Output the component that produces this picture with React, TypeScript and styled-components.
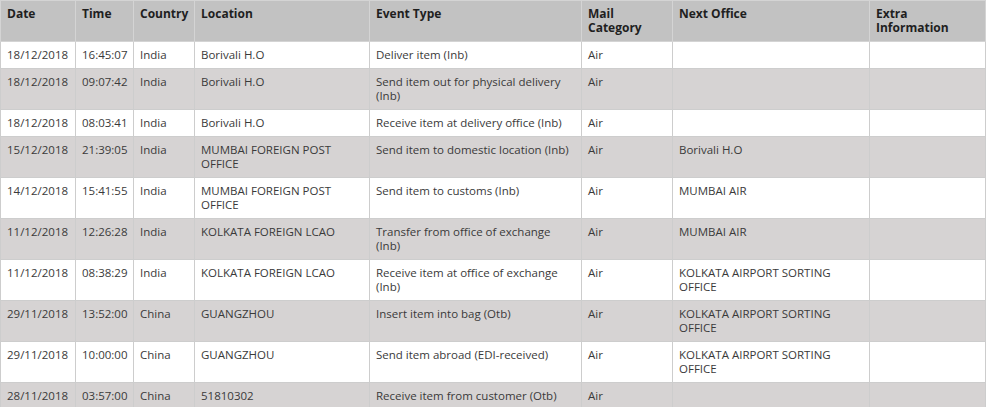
import styled, { createGlobalStyle } from "styled-components";

interface TrackEvent {
  date: string;
  time: string;
  country: string;
  location: string;
  eventType: string;
  mailCategory: string;
  nextOffice: string;
  extra: string;
}

const events: TrackEvent[] = [
  { date: "18/12/2018", time: "16:45:07", country: "India", location: "Borivali H.O", eventType: "Deliver item (Inb)", mailCategory: "Air", nextOffice: "", extra: "" },
  { date: "18/12/2018", time: "09:07:42", country: "India", location: "Borivali H.O", eventType: "Send item out for physical delivery (Inb)", mailCategory: "Air", nextOffice: "", extra: "" },
  { date: "18/12/2018", time: "08:03:41", country: "India", location: "Borivali H.O", eventType: "Receive item at delivery office (Inb)", mailCategory: "Air", nextOffice: "", extra: "" },
  { date: "15/12/2018", time: "21:39:05", country: "India", location: "MUMBAI FOREIGN POST OFFICE", eventType: "Send item to domestic location (Inb)", mailCategory: "Air", nextOffice: "Borivali H.O", extra: "" },
  { date: "14/12/2018", time: "15:41:55", country: "India", location: "MUMBAI FOREIGN POST OFFICE", eventType: "Send item to customs (Inb)", mailCategory: "Air", nextOffice: "MUMBAI AIR", extra: "" },
  { date: "11/12/2018", time: "12:26:28", country: "India", location: "KOLKATA FOREIGN LCAO", eventType: "Transfer from office of exchange (Inb)", mailCategory: "Air", nextOffice: "MUMBAI AIR", extra: "" },
  { date: "11/12/2018", time: "08:38:29", country: "India", location: "KOLKATA FOREIGN LCAO", eventType: "Receive item at office of exchange (Inb)", mailCategory: "Air", nextOffice: "KOLKATA AIRPORT SORTING OFFICE", extra: "" },
  { date: "29/11/2018", time: "13:52:00", country: "China", location: "GUANGZHOU", eventType: "Insert item into bag (Otb)", mailCategory: "Air", nextOffice: "KOLKATA AIRPORT SORTING OFFICE", extra: "" },
  { date: "29/11/2018", time: "10:00:00", country: "China", location: "GUANGZHOU", eventType: "Send item abroad (EDI-received)", mailCategory: "Air", nextOffice: "KOLKATA AIRPORT SORTING OFFICE", extra: "" },
  { date: "28/11/2018", time: "03:57:00", country: "China", location: "51810302", eventType: "Receive item from customer (Otb)", mailCategory: "Air", nextOffice: "", extra: "" },
];

const columns = [
  { label: "Date", width: 75 },
  { label: "Time", width: 58 },
  { label: "Country", width: 61 },
  { label: "Location", width: 175 },
  { label: "Event Type", width: 212 },
  { label: "Mail Category", width: 91 },
  { label: "Next Office", width: 197 },
  { label: "Extra Information", width: 116 },
];

const GlobalStyle = createGlobalStyle`
  body {
    margin: 0;
    background: #ffffff;
    font-family: "Open Sans", "Noto Sans", "Liberation Sans", sans-serif;
  }
`;

const Table = styled.table`
  width: 985px;
  table-layout: fixed;
  border-collapse: collapse;
  font-size: 11.5px;
  line-height: 14px;
  color: #3a3a3a;
`;

const HeaderCell = styled.th`
  background: #c2c2c2;
  color: #1f1f1f;
  font-size: 12px;
  font-weight: 700;
  text-align: left;
  vertical-align: top;
  padding: 6px 6px;
  height: 27px;
  border: 1px solid #d4d4d4;
`;

const Row = styled.tr<{ $alt: boolean }>`
  background: ${(p) => (p.$alt ? "#d6d3d3" : "#ffffff")};
`;

const Cell = styled.td`
  vertical-align: top;
  padding: 6px;
  height: 14px;
  border: 1px solid #cdcdcd;
  overflow: hidden;
`;

const App = () => {
  return (
    <>
      <GlobalStyle />
      <Table>
        <colgroup>
          {columns.map((c) => (
            <col key={c.label} style={{ width: c.width }} />
          ))}
        </colgroup>
        <thead>
          <tr>
            {columns.map((c) => (
              <HeaderCell key={c.label}>{c.label}</HeaderCell>
            ))}
          </tr>
        </thead>
        <tbody>
          {events.map((e, i) => (
            <Row key={i} $alt={i % 2 === 1}>
              <Cell>{e.date}</Cell>
              <Cell>{e.time}</Cell>
              <Cell>{e.country}</Cell>
              <Cell>{e.location}</Cell>
              <Cell>{e.eventType}</Cell>
              <Cell>{e.mailCategory}</Cell>
              <Cell>{e.nextOffice}</Cell>
              <Cell>{e.extra}</Cell>
            </Row>
          ))}
        </tbody>
      </Table>
    </>
  );
};

export default App;
